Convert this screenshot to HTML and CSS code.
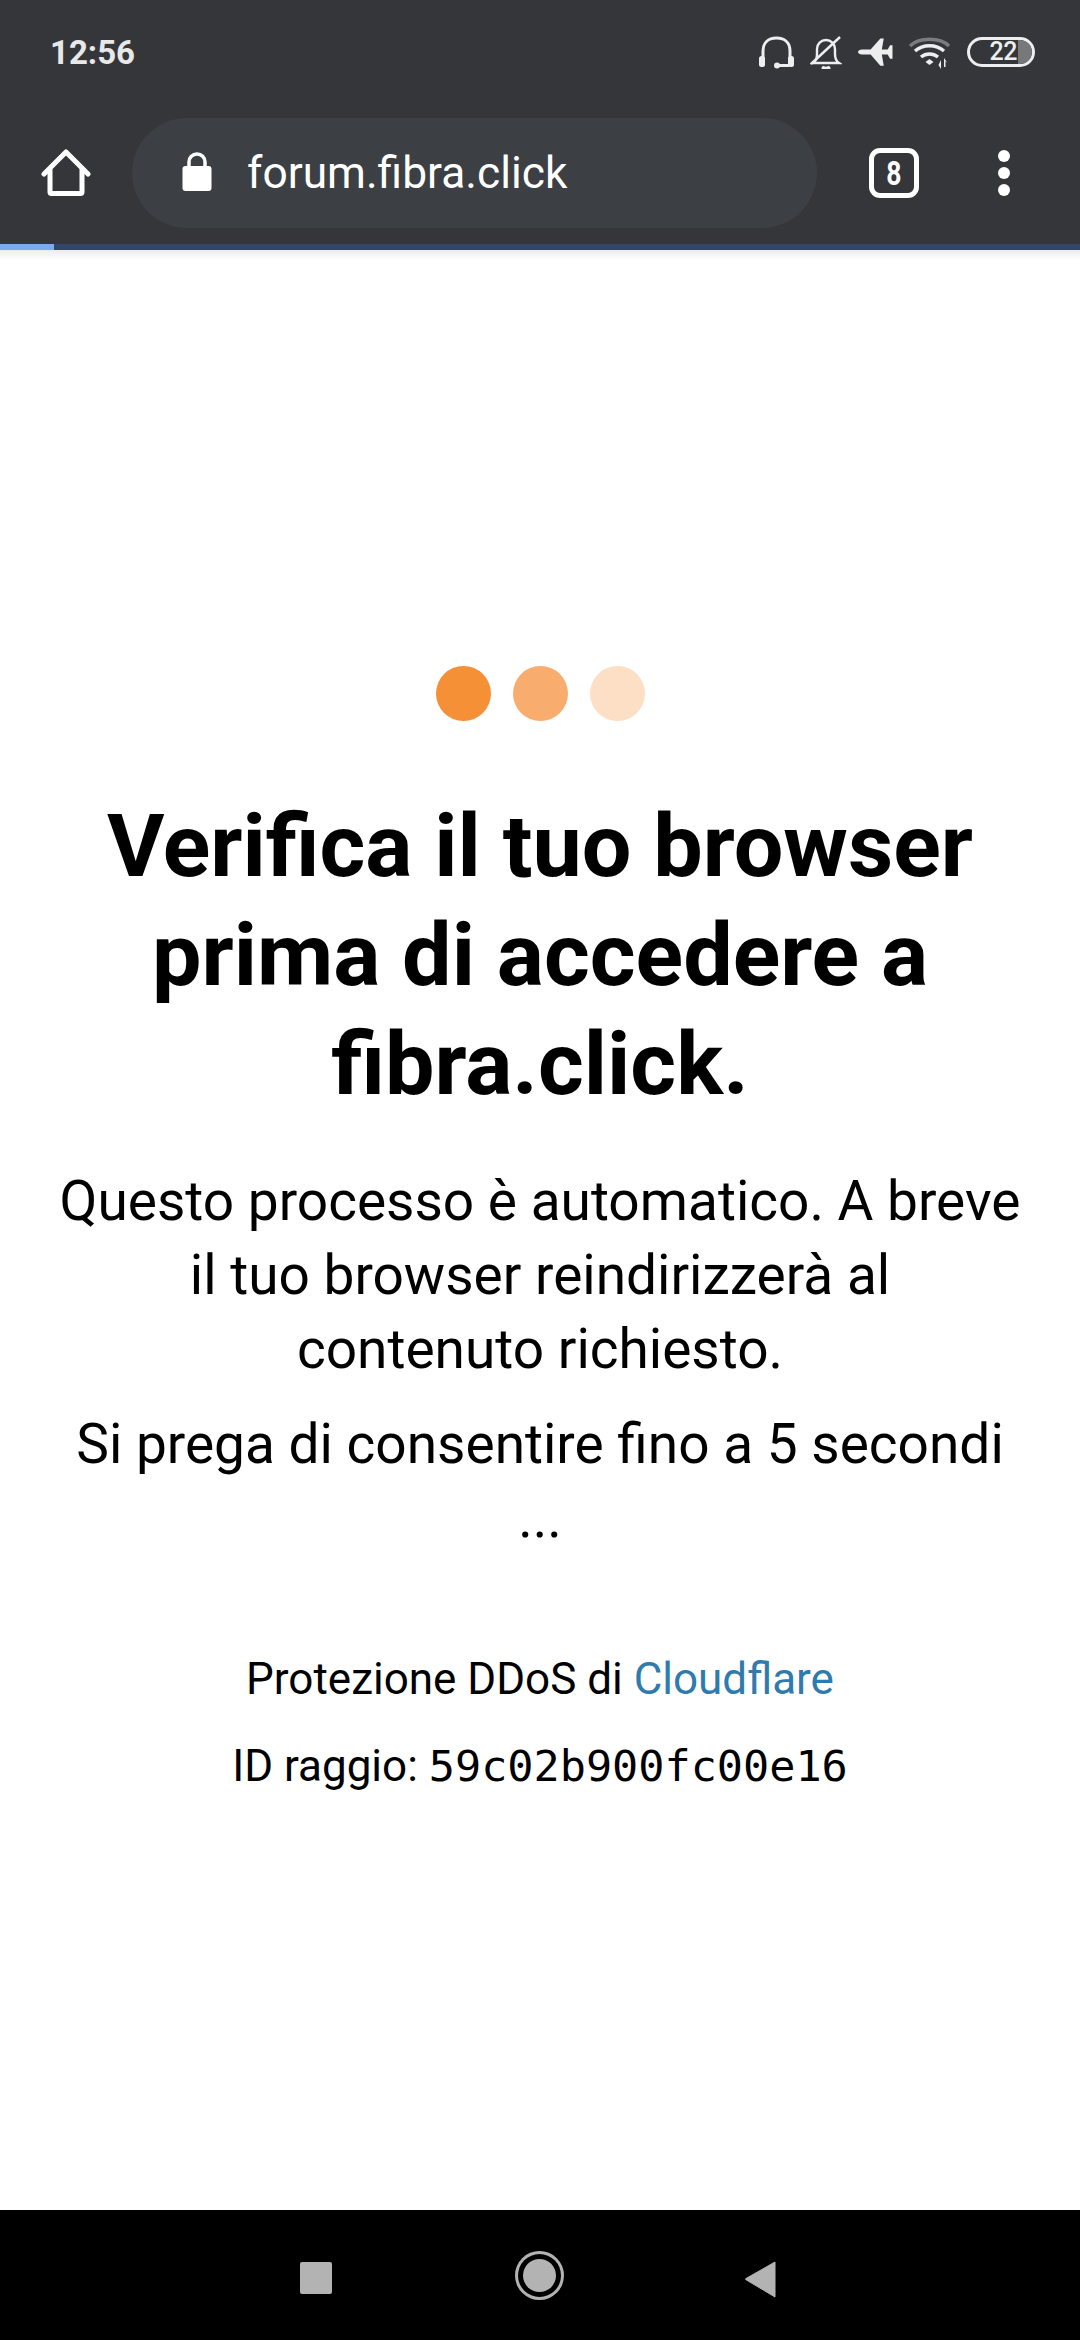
FILE: index.html
```html
<!DOCTYPE html>
<html lang="it">
  <head>
    <meta charset="UTF-8" />
    <title>Verifica il tuo browser</title>
    <link rel="stylesheet" href="styles.css">
  </head>
  <body>
    <header class="chrome">
      <div class="statusbar">
        <span class="clock">12:56</span>
        <div class="status-icons">
          <svg class="ic-headset" width="35" height="33" viewBox="0 0 35 33" fill="none" stroke="#eee" stroke-width="3">
            <path d="M4 22V15C4 7 9 2 17.500 2S31 7 31 15v7"/>
            <rect x="0" y="20" width="6" height="11" rx="2.500" fill="#eee" stroke="none"/>
            <rect x="29" y="20" width="6" height="11" rx="2.500" fill="#eee" stroke="none"/>
            <path d="M18 29.500h12"/>
            <circle cx="18" cy="29.500" r="3" fill="#eee" stroke="none"/>
          </svg>
          <svg class="ic-bell" width="32" height="33" viewBox="0 0 32 33" fill="none" stroke="#eee" stroke-width="2.400">
            <path d="M3 27c3-2 4-5 4-9v-5c0-5 4-9 9-9s9 4 9 9v5c0 4 1 7 4 9z"/>
            <path d="M12 31c2 1.500 6 1.500 8 0" stroke-width="3"/>
            <path d="M1 28L30 1"/>
          </svg>
          <svg class="ic-plane" width="35" height="31" viewBox="0 0 36 31" fill="#eee">
            <path d="M0 15c0-1.500 2-2.500 4-2.500h9L23 1h3.500l-2 11.500h6L33 8h2.500v14H33l-2.500-4.500h-6l2 11.500H23L13 17.500H4c-2 0-4-1-4-2.500z"/>
          </svg>
          <svg class="ic-wifi" width="42" height="33" viewBox="0 0 42 33" fill="none" stroke-width="3.400">
            <path d="M1 10C10 1 31 1 40 10" stroke="#7b7c7e"/>
            <path d="M6 15c8-7 21-7 29 0" stroke="#eee"/>
            <path d="M12 21c5-4 12-4 17 0" stroke="#eee"/>
            <path d="M16.500 26l4-3 4 3-4 3z" fill="#eee" stroke="none"/>
            <path d="M32 24v9l-2.500-4zM35 22v9h1.500v-6l2 2z" fill="#eee" stroke="none"/>
          </svg>
          <div class="battery">
            <span class="battery-num">22</span>
            <span class="battery-fill"></span>
          </div>
        </div>
      </div>
      <div class="toolbar">
        <svg class="ic-home" width="50" height="50" viewBox="0 0 50 50" fill="none" stroke="#fff" stroke-width="5" stroke-linejoin="round" stroke-linecap="round">
          <path d="M3 26L25 4l22 22"/>
          <path d="M9 21v23c0 1 .5 1.500 1.500 1.500h29c1 0 1.500-.5 1.500-1.500V21"/>
        </svg>
        <div class="urlbar">
          <svg class="ic-lock" width="30" height="40" viewBox="0 0 30 40">
            <path d="M7 16V10a8 8 0 0 1 16 0v6" fill="none" stroke="#fff" stroke-width="3.500"/>
            <rect x="0.500" y="14" width="29" height="25" rx="3" fill="#fff"/>
          </svg>
          <span class="url">forum.fibra.click</span>
        </div>
        <div class="tabs"><span class="tabs-num">8</span></div>
        <div class="menu"><i></i><i></i><i></i></div>
      </div>
      <div class="progress"><div class="progress-done"></div></div>
    </header>

    <main class="page">
      <div class="dots">
        <span class="dot dot-1"></span>
        <span class="dot dot-2"></span>
        <span class="dot dot-3"></span>
      </div>
      <h1>Verifica il tuo browser prima di accedere a fibra.click.</h1>
      <p class="lead">Questo processo è automatico. A breve il tuo browser reindirizzerà al<br>contenuto richiesto.</p>
      <p class="lead wait">Si prega di consentire fino a 5 secondi<br>...</p>
      <p class="small ddos">Protezione DDoS di <a href="#">Cloudflare</a></p>
      <p class="small ray">ID raggio: <code>59c02b900fc00e16</code></p>
    </main>

    <footer class="navbar">
      <span class="nav-square"></span>
      <span class="nav-circle"></span>
      <svg class="nav-back" width="32" height="38" viewBox="0 0 32 38">
        <path d="M31 2L2 18.500c-.7.4-.7.8 0 1.200L31 37z" fill="#b3b3b3" stroke="#b3b3b3" stroke-width="1" stroke-linejoin="round"/>
      </svg>
    </footer>
  </body>
</html>
```

FILE: styles.css
```css
* {
  box-sizing: border-box;
}
html, body {
  margin: 0;
  height: 100%;
}
body {
  width: 1080px;
  height: 2340px;
  display: flex;
  flex-direction: column;
  background: #fff;
  font-family: Roboto, sans-serif;
  color: #000;
  overflow: hidden;
}

/* browser top */
.chrome {
  background: #35363a;
  flex: none;
}
.statusbar {
  height: 104px;
  padding: 0 45px 0 50px;
  display: flex;
  justify-content: space-between;
  align-items: center;
}
.clock {
  font-size: 33px;
  font-weight: 700;
  color: #e8e8e8;
}
.status-icons {
  display: flex;
  align-items: center;
  gap: 16px;
}
.battery {
  width: 68px;
  height: 30px;
  border: 3px solid #eee;
  border-radius: 15px;
  display: flex;
  align-items: center;
  justify-content: flex-end;
  color: #eee;
  font-size: 25px;
  font-weight: 500;
  overflow: hidden;
}
.battery-num {
  line-height: 24px;
  letter-spacing: -0.5px;
}
.battery-fill {
  width: 14px;
  height: 24px;
  background: #77787a;
  border-radius: 0 12px 12px 0;
  margin-left: 1px;
}
.toolbar {
  height: 140px;
  padding: 14px 0 16px 41px;
  display: flex;
  align-items: center;
}
.urlbar {
  width: 685px;
  height: 110px;
  margin-left: 41px;
  padding-left: 50px;
  background: #3c3f43;
  border-radius: 55px;
  display: flex;
  align-items: center;
  gap: 35px;
}
.ic-lock {
  margin-top: -2px;
}
.url {
  font-size: 44.300px;
  color: #fff;
}
.tabs {
  width: 50px;
  height: 50px;
  margin-left: 52px;
  border: 5px solid #fff;
  border-radius: 11px;
  color: #fff;
  font-size: 34px;
  font-weight: 700;
  line-height: 40px;
  text-align: center;
}
.tabs-num {
  display: inline-block;
  transform: scaleX(0.78);
}
.menu {
  margin-left: 79px;
  display: flex;
  flex-direction: column;
  gap: 5px;
}
.menu i {
  display: block;
  width: 12px;
  height: 12px;
  border-radius: 50%;
  background: #fff;
}
.progress {
  height: 6px;
  background: #344668;
}
.progress-done {
  width: 54px;
  height: 6px;
  background: #7baaf0;
}

/* page */
.page {
  flex: 1;
  padding: 0 50px;
  text-align: center;
  background: linear-gradient(#ececec, #fff 10px) no-repeat;
}
.dots {
  margin-top: 416px;
  display: flex;
  justify-content: center;
  gap: 22px;
}
.dot {
  width: 55px;
  height: 55px;
  border-radius: 50%;
}
.dot-1 {
  background: #f69036;
}
.dot-2 {
  background: #f8ad6f;
}
.dot-3 {
  background: #fddfc6;
}
h1 {
  margin: 70px 0 0;
  font-size: 88px;
  line-height: 109px;
  font-weight: 700;
}
.lead {
  margin: 0;
  font-size: 55px;
  line-height: 74px;
}
h1 + .lead {
  margin-top: 46px;
}
.wait {
  margin-top: 21px;
}
.small {
  margin: 0;
  font-size: 44px;
  line-height: 60px;
}
.ddos {
  margin-top: 94px;
}
.ray {
  margin-top: 27px;
}
.small a {
  color: #2f7bad;
  text-decoration: none;
}
.small code {
  font-family: "DejaVu Sans Mono", monospace;
  font-size: 43.500px;
}

/* android buttons */
.navbar {
  flex: none;
  height: 130px;
  background: #000;
  position: relative;
}
.nav-square {
  position: absolute;
  left: 300px;
  top: 52px;
  width: 32px;
  height: 32px;
  border-radius: 2px;
  background: #b3b3b3;
}
.nav-circle {
  position: absolute;
  left: 523px;
  top: 49px;
  width: 33px;
  height: 33px;
  border-radius: 50%;
  background: #b3b3b3;
  box-shadow: 0 0 0 5px #000, 0 0 0 8px #b3b3b3;
}
.nav-back {
  position: absolute;
  left: 744px;
  top: 50px;
}
```
